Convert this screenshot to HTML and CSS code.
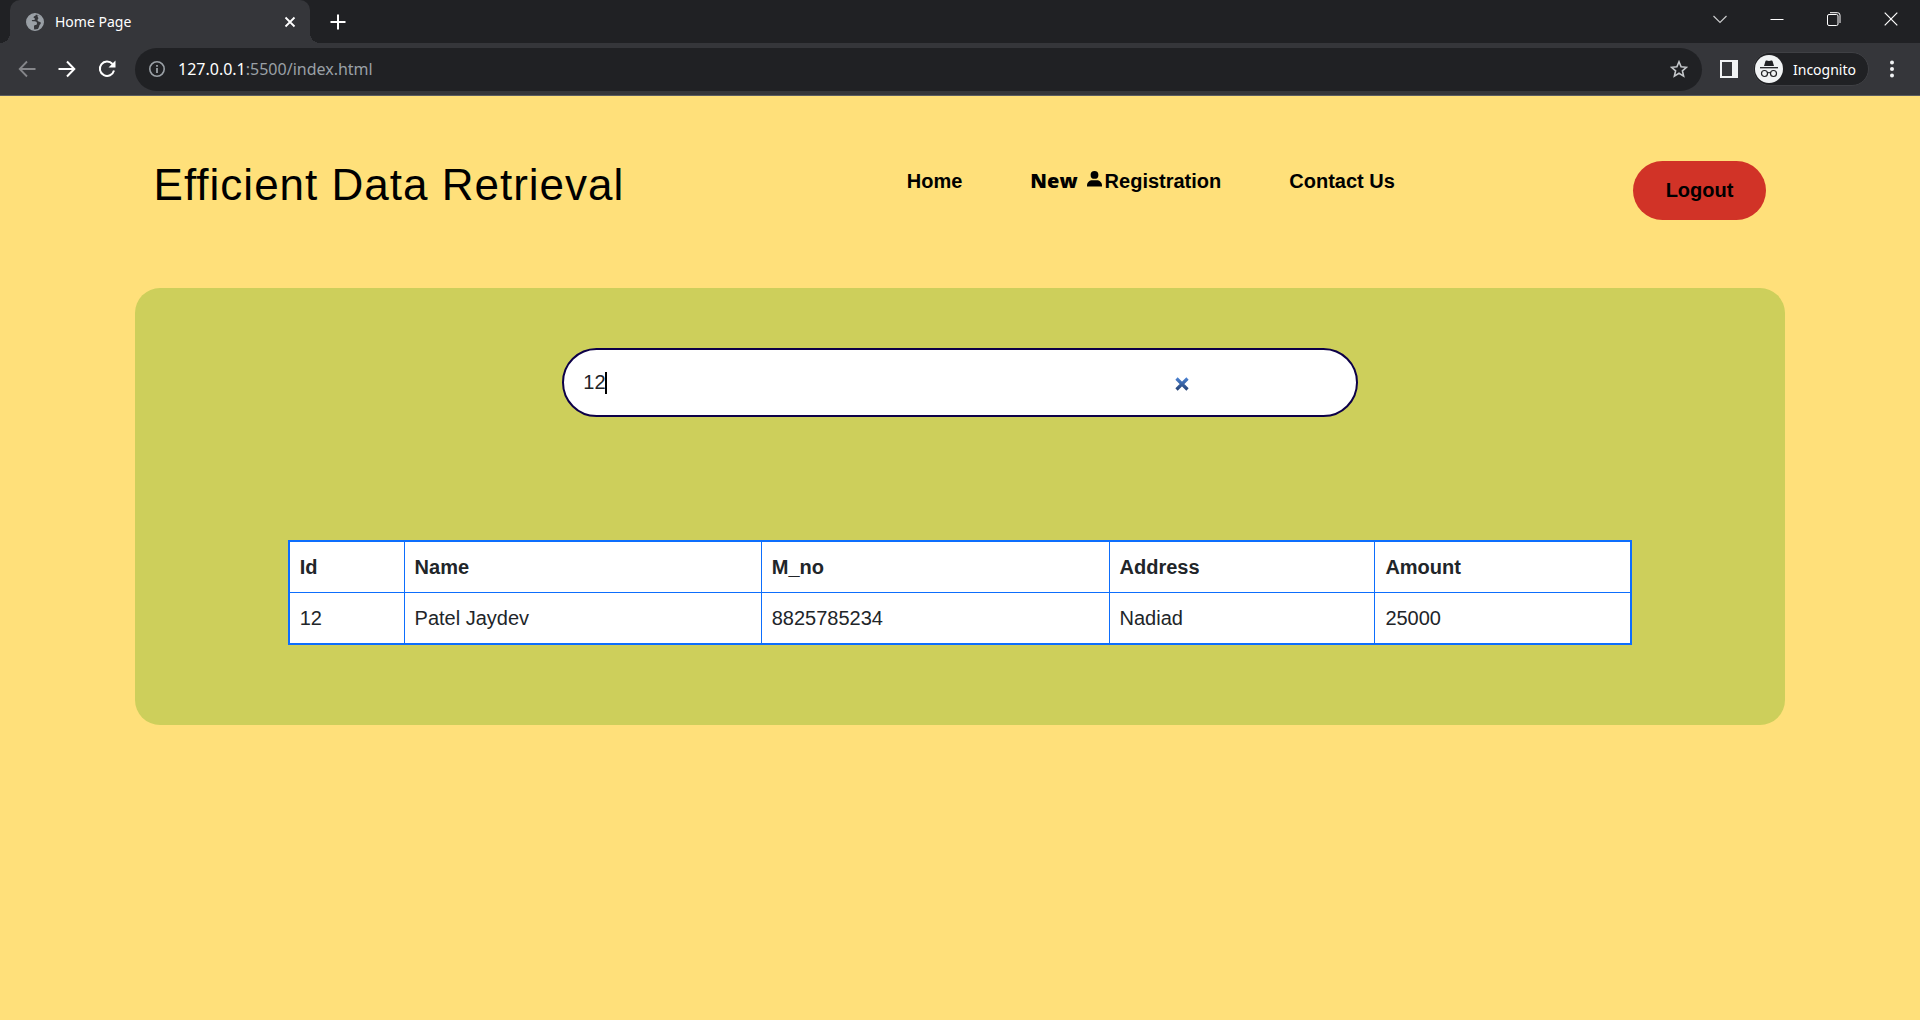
FILE: index.html
```html
<!DOCTYPE html>
<html lang="en">
<head>
<meta charset="utf-8">
<title>Home Page</title>
<link rel="stylesheet" href="styles.css">
</head>
<body>
<div class="browser">
  <div class="tab-strip">
    <div class="tab">
      <svg class="tab-globe" width="18" height="18" viewBox="0 0 18 18"><circle cx="9" cy="9" r="8.200" fill="#35363a" stroke="#9aa0a6" stroke-width="1.600"/><path d="M1 8.500C1 4.500 4 1.200 8.500 1c1 0 1.500.3 1.500.8C10 3 7.500 3 7.500 4.200c0 .8 1.500.8 1.500 1.800S7.500 7 6.500 7c-1 0-.8 1.300 0 1.300h2c1.500 0 2.500.7 2.500 2.200 0 1-.8 1.500-1.800 1.500-1.200 0-1.200 1.200-1.200 2 0 1 .3 2 0 2.800C4 16.500 1 13 1 8.500Z" fill="#9aa0a6"/><path d="M11.500 2C14.500 3 17 5.500 17 9c0 3.500-2 6-4.500 7.200-.5-1.200.8-2 .8-3.200 0-1.500 1.500-1.500 1.500-3C14.800 8.500 13.500 9 12.500 8.500 11.500 8 11 7 12 6c.8-.8.3-1.500-.3-2Z" fill="#9aa0a6"/></svg>
      <span class="tab-title">Home Page</span>
      <button class="icon-button" type="button" aria-label="Close tab"><svg width="12" height="12" viewBox="0 0 12 12"><path d="M1.500 1.500l9 9m0-9l-9 9" stroke="#fff" stroke-width="1.800" fill="none"/></svg></button>
    </div>
    <button class="icon-button new-tab" type="button" aria-label="New tab"><svg width="16" height="16" viewBox="0 0 16 16"><path d="M8 .5v15M.5 8h15" stroke="#fff" stroke-width="2" fill="none"/></svg></button>
    <div class="window-controls">
      <button class="icon-button" type="button" aria-label="Search tabs"><svg width="14" height="14" viewBox="0 0 14 14"><path d="M.5 4L7 10.500 13.500 4" stroke="#c9cacc" stroke-width="1.200" fill="none"/></svg></button>
      <button class="icon-button" type="button" aria-label="Minimize"><svg width="14" height="14" viewBox="0 0 14 14"><path d="M.5 7.500h13" stroke="#fff" fill="none"/></svg></button>
      <button class="icon-button" type="button" aria-label="Restore"><svg width="14" height="14" viewBox="0 0 14 14"><rect x=".5" y="2.500" width="10.500" height="11" rx="1.500" stroke="#fff" fill="none"/><path d="M3 .7h7.500a2.500 2.500 0 0 1 2.500 2.500V11" stroke="#fff" fill="none"/></svg></button>
      <button class="icon-button" type="button" aria-label="Close"><svg width="14" height="14" viewBox="0 0 14 14"><path d="M.7.7l12.600 12.600m0-12.600L.7 13.300" stroke="#fff" stroke-width="1.200" fill="none"/></svg></button>
    </div>
  </div>
  <div class="toolbar">
    <div class="nav-buttons">
      <button class="icon-button" type="button" aria-label="Back"><svg width="18" height="18" viewBox="0 0 18 18"><path d="M17.500 9H2M9 1.500L1.700 9 9 16.500" stroke="#85868a" stroke-width="1.800" fill="none"/></svg></button>
      <button class="icon-button" type="button" aria-label="Forward"><svg width="18" height="18" viewBox="0 0 18 18"><path d="M.5 9H16M9 1.500L16.300 9 9 16.500" stroke="#fff" stroke-width="2" fill="none"/></svg></button>
      <button class="icon-button" type="button" aria-label="Reload"><svg width="18" height="18" viewBox="0 0 18 18"><path d="M14.500 4A7.200 7.200 0 1 0 16 10.500" stroke="#fff" stroke-width="2" fill="none"/><path d="M17.500.5v7h-7Z" fill="#fff"/></svg></button>
    </div>
    <div class="address-bar">
      <svg width="16" height="16" viewBox="0 0 16 16"><circle cx="8" cy="8" r="7.200" stroke="#9aa0a6" stroke-width="1.600" fill="none"/><path d="M7.100 7h1.800v5H7.100zM7.100 4h1.800v1.800H7.100z" fill="#9aa0a6"/></svg>
      <span class="url"><span class="url-host">127.0.0.1</span>:5500/index.html</span>
      <button class="icon-button" type="button" aria-label="Bookmark this tab"><svg width="18" height="18" viewBox="0 0 18 18"><path d="M9 1.800l2.100 5 5.400.5-4.100 3.500 1.200 5.300L9 13.300l-4.600 2.800 1.200-5.300-4.100-3.500 5.400-.5Z" stroke="#c4c7ca" stroke-width="1.600" fill="none"/></svg></button>
    </div>
    <button class="icon-button side-panel" type="button" aria-label="Side panel"><svg width="18" height="18" viewBox="0 0 18 18"><path fill-rule="evenodd" d="M0 0h18v18H0ZM2 2v14h10V2Z" fill="#f1f3f4"/></svg></button>
    <button class="incognito" type="button">
      <svg width="28" height="28" viewBox="0 0 28 28"><circle cx="14" cy="14" r="14" fill="#f1f3f4"/><path d="M9 11l1.500-5q.3-.8 1.200-.5l2.300.5 2.300-.5q.9-.3 1.200.5L19 11Z" fill="#202124"/><path d="M5 12.700h18" stroke="#202124" stroke-width="1.300"/><circle cx="9.500" cy="18.500" r="3" fill="none" stroke="#202124" stroke-width="1.200"/><circle cx="18.500" cy="18.500" r="3" fill="none" stroke="#202124" stroke-width="1.200"/><path d="M12.500 18q1.500-1 3 0" fill="none" stroke="#202124" stroke-width="1.200"/></svg>
      <span>Incognito</span>
    </button>
    <button class="icon-button menu" type="button" aria-label="Menu"><svg width="4" height="18" viewBox="0 0 4 18"><g fill="#f1f3f4"><circle cx="2" cy="2.500" r="2"/><circle cx="2" cy="9" r="2"/><circle cx="2" cy="15.500" r="2"/></g></svg></button>
  </div>
</div>

<header class="site-header">
  <h1 class="site-title">Efficient Data Retrieval</h1>
  <nav class="site-nav">
    <a href="#">Home</a>
    <a class="register-link" href="#"><span class="new-label">New</span><svg width="15" height="16" viewBox="0 0 15 16"><circle cx="7.500" cy="3.900" r="3.900" fill="#000"/><path d="M0 15.500v-1C0 11.300 2.500 9.300 5.500 9.300h4c3 0 5.500 2 5.500 5.200v1Z" fill="#000"/></svg><span>Registration</span></a>
    <a href="#">Contact Us</a>
  </nav>
  <button class="logout" type="button">Logout</button>
</header>

<main class="panel">
  <form class="search">
    <input class="search-input" type="text" value="12" aria-label="Search by id">
    <span class="caret"></span>
    <button class="icon-button clear" type="button" aria-label="Clear search"><svg width="14" height="14" viewBox="0 0 14 14"><defs><linearGradient id="clear-fill" x1="0" y1="0" x2="0" y2="14" gradientUnits="userSpaceOnUse"><stop offset="0" stop-color="#4d86d8"/><stop offset="1" stop-color="#243f70"/></linearGradient></defs><path d="M1.500 1.500l11 11m0-11l-11 11" stroke="url(#clear-fill)" stroke-width="3.200" fill="none"/></svg></button>
  </form>
  <table class="records">
    <colgroup><col class="col-id"><col class="col-name"><col class="col-phone"><col class="col-address"><col></colgroup>
    <thead>
      <tr><th>Id</th><th>Name</th><th>M_no</th><th>Address</th><th>Amount</th></tr>
    </thead>
    <tbody>
      <tr><td>12</td><td>Patel Jaydev</td><td>8825785234</td><td>Nadiad</td><td>25000</td></tr>
    </tbody>
  </table>
</main>
</body>
</html>
```
FILE: styles.css
```css
* {
  box-sizing: border-box;
}

body {
  margin: 0;
  min-height: 100vh;
  background: #ffe07a;
  color: #212529;
  font-family: "Liberation Sans", Arial, sans-serif;
  font-size: 20px;
}

button {
  font: inherit;
  border: 0;
  cursor: pointer;
}

svg {
  display: block;
  flex: none;
}

.icon-button {
  padding: 0;
  background: none;
}

/* Browser window */
.browser {
  background: #35363a;
  border-bottom: 1px solid #5b5c5f;
  color: #fff;
  font-family: "Noto Sans", "Open Sans", sans-serif;
}

.tab-strip {
  display: flex;
  align-items: center;
  height: 43px;
  padding: 0 22px 0 10px;
  background: #202124;
}

.tab {
  position: relative;
  display: flex;
  align-items: center;
  gap: 11px;
  width: 300px;
  height: 43px;
  padding: 0 14px 0 16px;
  border-radius: 10px 10px 0 0;
  background: #35363a;
  font-size: 14px;
}

.tab::before,
.tab::after {
  content: "";
  position: absolute;
  bottom: 0;
  width: 10px;
  height: 10px;
}

.tab::before {
  right: 100%;
  background: radial-gradient(circle at 0 0, #202124 10px, #35363a 10px);
}

.tab::after {
  left: 100%;
  background: radial-gradient(circle at 100% 0, #202124 10px, #35363a 10px);
}

.tab-title {
  flex: 1;
}

.new-tab {
  margin-left: 20px;
}

.window-controls {
  display: flex;
  gap: 43px;
  margin-left: auto;
  padding-bottom: 6px;
}

.toolbar {
  display: flex;
  align-items: center;
  height: 52px;
  padding: 0 26px 0 18px;
}

.nav-buttons {
  display: flex;
  gap: 22px;
}

.address-bar {
  display: flex;
  flex: 1;
  align-items: center;
  gap: 13px;
  height: 43px;
  margin-left: 19px;
  padding: 0 14px;
  border-radius: 22px;
  background: #202124;
  font-size: 16px;
}

.url {
  flex: 1;
  color: #9aa0a6;
}

.url-host {
  color: #fff;
}

.side-panel {
  margin-left: 18px;
}

.incognito {
  display: flex;
  align-items: center;
  gap: 10px;
  height: 34px;
  margin-left: 15px;
  padding: 0 12px 0 1px;
  border: 1px solid #3f4044;
  border-radius: 17px;
  background: #202124;
  color: #fff;
  font-size: 14px;
}

.menu {
  margin-left: 21px;
}

/* Site header */
.site-header {
  display: grid;
  grid-template-columns: 46.7% 1fr auto;
  align-items: start;
  padding: 65px 8% 68px;
}

.site-title {
  margin: 0;
  color: #000;
  font-size: 44px;
  font-weight: 400;
  line-height: 48px;
  letter-spacing: 1px;
}

.site-nav {
  display: flex;
  gap: 68px;
  padding-top: 8px;
  font-weight: 700;
  line-height: 24px;
}

.site-nav a {
  color: #000;
  text-decoration: none;
}

.register-link {
  display: flex;
}

.new-label {
  margin-right: 9px;
  font-family: "Open Sans", "Noto Sans", sans-serif;
  font-weight: 800;
}

.register-link svg {
  margin-top: 2px;
  margin-right: 3px;
}

.logout {
  height: 59px;
  padding: 0 33px;
  border-radius: 30px;
  background: #d13327;
  color: #000;
  font-weight: 700;
}

/* Search panel */
.panel {
  margin: 0 135px;
  padding: 60px 0 80px;
  border-radius: 25px;
  background: #cdcf5b;
}

.search {
  position: relative;
  width: 48.2%;
  margin: 0 auto;
}

.search-input {
  display: block;
  width: 100%;
  height: 69px;
  padding: 0 19px;
  border: 2px solid #0d0048;
  border-radius: 35px;
  outline: 0;
  background: #fff;
  color: #212529;
  font: inherit;
}

.caret {
  position: absolute;
  top: 24px;
  left: 43px;
  width: 2px;
  height: 22px;
  background: #000;
}

.clear {
  position: absolute;
  top: 29px;
  right: 21.2%;
}

.records {
  width: 81.5%;
  margin: 123px auto 0;
  table-layout: fixed;
  border: 2px solid #0d6efd;
  border-collapse: collapse;
  background: #fff;
  line-height: 30px;
  text-align: left;
}

.records th,
.records td {
  padding: 10px;
  border: 1px solid #0d6efd;
}

.col-id {
  width: 8.6%;
}

.col-name {
  width: 26.6%;
}

.col-phone {
  width: 25.9%;
}

.col-address {
  width: 19.8%;
}
```
